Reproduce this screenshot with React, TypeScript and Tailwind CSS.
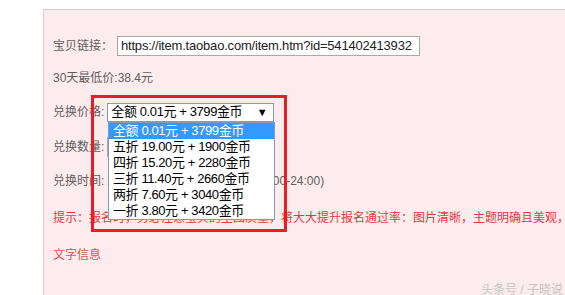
const OPTIONS = [
  '全额 0.01元 + 3799金币',
  '五折 19.00元 + 1900金币',
  '四折 15.20元 + 2280金币',
  '三折 11.40元 + 2660金币',
  '两折 7.60元 + 3040金币',
  '一折 3.80元 + 3420金币',
];

const FONT = "font-['Liberation_Sans','Noto_Sans_CJK_SC',sans-serif]";

export default function App() {
  return (
    <div className={`relative h-[295px] w-[565px] overflow-hidden bg-white ${FONT}`}>
      {/* Pink form panel */}
      <div className="ml-[43px] mt-[9px] h-[300px] w-[540px] border-l border-t border-[#e8c4c5] bg-[#fdeced] pl-[9px] pt-[19px] text-[12px] text-[#5f5f5f]">
        <div className="flex h-[34px] items-center">
          <span>宝贝链接：</span>
          <div className="ml-[4px] h-[20px] w-[303px] overflow-hidden whitespace-nowrap border border-[#a9a9a9] bg-white pl-[3px] text-[13px] leading-[18px] tracking-[-0.2px] text-[#222]">
            https://item.taobao.com/item.htm?id=541402413932
          </div>
        </div>

        <div className="flex h-[30px] items-center">30天最低价:38.4元</div>

        <div className="flex h-[38px] items-center">
          <span>兑换价格:</span>
          <div className="ml-[3px] flex h-[19px] w-[167px] items-center justify-between whitespace-nowrap border border-[#7f9db9] bg-white pl-[3px] pr-[6px] text-[13px] tracking-[-0.4px] text-black">
            <span>{OPTIONS[0]}</span>
            <span className="text-[11px]">▼</span>
          </div>
        </div>

        <div className="flex h-[32px] items-center">
          <span>兑换数量:</span>
          <div className="ml-[3px] h-[20px] w-[60px] border border-[#a9a9a9] bg-white" />
        </div>

        <div className="flex h-[36px] items-center whitespace-nowrap">
          <span>兑换时间:</span>
          <span className="ml-[3px]">2017-04-01 至 2017-04-30 (00:00-24:00)</span>
        </div>

        <div className="flex h-[38px] items-center whitespace-nowrap text-[#e4393c]">
          提示：报名时，务必注意宝贝的主图质量，将大大提升报名通过率：图片清晰，主题明确且美观，
        </div>

        <div className="flex h-[36px] items-center text-[#d9534f]">文字信息</div>
      </div>

      {/* Open dropdown list */}
      <div className="absolute left-[108px] top-[122px] w-[167px] border border-[#7f9db9] bg-white text-[13px] tracking-[-0.4px] text-black">
        {OPTIONS.map((o, i) => (
          <div
            key={o}
            className={`h-[16px] whitespace-nowrap pl-[4px] leading-[16px] ${i === 0 ? 'bg-[#3399ff] text-white' : ''}`}
          >
            {o}
          </div>
        ))}
      </div>

      {/* Red annotation box */}
      <div className="absolute left-[91px] top-[95px] h-[137px] w-[196px] border-[3px] border-[#ec1c24]" />

      {/* Watermark */}
      <div className="absolute left-[481px] top-[281px] text-[12px] text-[#c4c4c4]">头条号 / 子晓说</div>
    </div>
  );
}
